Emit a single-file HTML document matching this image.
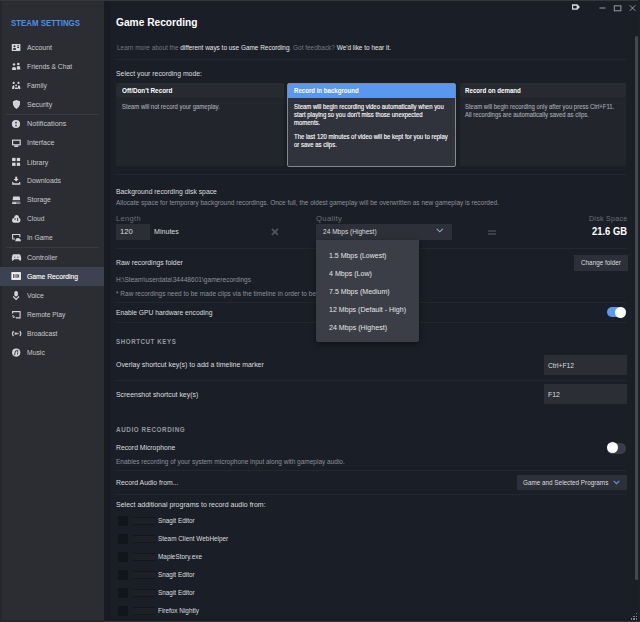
<!DOCTYPE html>
<html><head><meta charset="utf-8"><style>
html,body{margin:0;padding:0;}
body{width:640px;height:622px;overflow:hidden;position:relative;background:#1a1e26;font-family:"Liberation Sans", sans-serif;}
.t{position:absolute;white-space:pre;}
.k{-webkit-text-stroke-width:0.12px;}
.r{position:absolute;}
</style></head><body>
<div class="r" style="left:0px;top:0px;width:104px;height:622px;background:#2c2d32;"></div>
<div class="r" style="left:0px;top:0px;width:2px;height:622px;background:#26272b;"></div>
<div class="r" style="left:104px;top:0px;width:536px;height:622px;background:#1a1e26;"></div>
<div class="r" style="left:104px;top:0px;width:7px;height:622px;background:#181b21;"></div>
<div class="r" style="left:0px;top:0px;width:640px;height:1px;background:#35373c;"></div>
<div class="r" style="left:638px;top:0px;width:2px;height:622px;background:#1d2026;"></div>
<div class="r" style="left:104px;top:619px;width:536px;height:1px;background:#171a20;"></div>
<div class="r" style="left:0px;top:620px;width:104px;height:2px;background:#26272b;"></div>
<div class="r" style="left:104px;top:620px;width:536px;height:1px;background:#1c1e23;"></div>
<div class="r" style="left:104px;top:621px;width:536px;height:1px;background:#303236;"></div>
<div class="t" style="left:11.00px;top:18px;font-size:8.60px;line-height:10px;color:#4e90e8;transform:scaleX(0.9140);transform-origin:0 0;font-weight:bold;">STEAM SETTINGS</div>
<div class="r" style="left:0px;top:267px;width:104px;height:19px;background:#3d4250;"></div>
<div class="r" style="left:6px;top:114px;width:93px;height:1px;background:#393b41;"></div>
<div class="r" style="left:6px;top:247px;width:93px;height:1px;background:#393b41;"></div>
<svg class="r" style="left:0;top:0" width="30" height="370" viewBox="0 0 30 370">
    <!-- account -->
    <rect x="11.8" y="44" width="8.6" height="7" rx="0.6" fill="#d4d6d9"/>
    <circle cx="14.5" cy="46.3" r="1" fill="#2c2d32"/><rect x="13.2" y="48.1" width="2.7" height="1.8" fill="#2c2d32"/>
    <rect x="17.3" y="45.3" width="1.7" height="1" fill="#2c2d32"/><rect x="17.3" y="47" width="1.7" height="1" fill="#2c2d32"/>
    <!-- friends -->
    <circle cx="14" cy="64.4" r="1.2" fill="#d4d6d9"/><circle cx="18.3" cy="64" r="1.3" fill="#d4d6d9"/>
    <path d="M12 70 L12.3 67.6 Q14 66.3 15.8 67.6 L16 70Z" fill="#d4d6d9"/><path d="M16.8 69.6 L16.9 66.6 Q18.5 65.6 20 66.6 L20.4 69.6Z" fill="#d4d6d9"/>
    <!-- family -->
    <circle cx="13.7" cy="82.9" r="1.1" fill="#d4d6d9"/><circle cx="18.5" cy="82.9" r="1.1" fill="#d4d6d9"/><circle cx="16.1" cy="85.4" r="0.9" fill="#d4d6d9"/>
    <path d="M12 89 Q11.8 86 13.6 85 Q14.6 85.5 14.4 87.5 L13.8 89Z" fill="#d4d6d9"/><path d="M20.4 89 Q20.6 86 18.8 85 Q17.8 85.5 18 87.5 L18.6 89Z" fill="#d4d6d9"/>
    <rect x="14.9" y="87.5" width="3" height="1.6" rx="0.6" fill="#d4d6d9"/>
    <!-- security -->
    <path d="M16.45 100 L20 101.3 L19.9 104.6 Q19.3 107.6 16.45 108.9 Q13.6 107.6 13 104.6 L12.9 101.3Z" fill="#d4d6d9"/>
    <circle cx="16.45" cy="104.3" r="1.6" fill="none" stroke="#b9bbbf" stroke-width="0.5"/>
    <!-- notifications -->
    <circle cx="16" cy="124" r="4.1" fill="#d4d6d9"/><rect x="15.2" y="121.8" width="1.6" height="1.8" rx="0.6" fill="#2c2d32"/><circle cx="16" cy="125.5" r="0.85" fill="#2c2d32"/>
    <!-- interface -->
    <rect x="12.6" y="140.2" width="7.6" height="4.6" fill="none" stroke="#d4d6d9" stroke-width="1.2"/><rect x="14.3" y="145.4" width="4" height="1.6" fill="#d4d6d9"/>
    <!-- library -->
    <rect x="12.1" y="157.9" width="3.5" height="3.2" fill="#d4d6d9"/><rect x="16.8" y="157.9" width="3.3" height="3.2" fill="#d4d6d9"/>
    <rect x="12.1" y="162.7" width="3.5" height="3.2" fill="#d4d6d9"/><rect x="16.8" y="162.7" width="3.3" height="3.2" fill="#d4d6d9"/>
    <!-- downloads -->
    <path d="M15.2 176.8 H17.2 V179 H18.8 L16.2 181.6 L13.6 179 H15.2Z" fill="#d4d6d9"/>
    <path d="M12.2 182 H13.4 V183.3 H19.1 V182 H20.3 V184.8 H12.2Z" fill="#d4d6d9"/>
    <!-- storage -->
    <path d="M13.2 196.6 H19.6 L20.2 200 H12.6Z" fill="#d4d6d9"/><rect x="12.3" y="200.6" width="8" height="1.2" fill="#6c6e73"/>
    <rect x="12.2" y="202.2" width="4.4" height="1.8" fill="#d4d6d9"/><rect x="16.6" y="202.2" width="3.8" height="1.8" fill="#8d8f94"/>
    <!-- cloud -->
    <path d="M13.8 222.8 Q11.8 222.6 12 220 Q12.3 218 13.9 218 Q14.5 215 16.5 215 Q18.8 215.1 19.2 218 Q20.6 218.5 20.5 220.3 Q20.3 222.7 18.6 222.8Z" fill="#d4d6d9"/>
    <rect x="14.4" y="218.4" width="1.3" height="1.3" fill="#2c2d32"/><rect x="17.2" y="217.8" width="0.9" height="3.2" fill="#2c2d32"/>
    <!-- in game -->
    <path d="M15 239 H12.6 V234.5 H19.8 V237" fill="none" stroke="#d4d6d9" stroke-width="1.1"/>
    <path d="M15.3 241.2 Q15.6 238.1 17.8 238 Q20.6 238 21 241.2Z" fill="#d4d6d9"/>
    <!-- controller -->
    <path d="M13.3 254.2 H19.5 Q21 254.8 21.2 258.2 Q21.3 261 20.1 261 L18.6 259.2 H14.2 L12.7 261 Q11.6 261 11.8 258.2 Q12 254.8 13.3 254.2Z" fill="#d4d6d9"/>
    <circle cx="14.7" cy="257.2" r="0.7" fill="#6c6e73"/><circle cx="17.9" cy="257.2" r="0.7" fill="#6c6e73"/>
    <!-- game recording -->
    <rect x="11.4" y="272.1" width="9.5" height="7.8" fill="#f4f4f5"/>
    <rect x="13.2" y="274" width="1.1" height="4" fill="#3d4250"/><rect x="14.5" y="274.3" width="1.8" height="3.5" fill="#8f939b"/>
    <rect x="16.5" y="274" width="1.1" height="4" fill="#3d4250"/><path d="M18 274.6 H19.3 V275.4 H18.8 V276.8 H19.3 V277.6 H18Z" fill="#3d4250"/>
    <!-- voice -->
    <rect x="14.3" y="291" width="3.6" height="5.6" rx="1.8" fill="#d4d6d9"/>
    <path d="M13.2 296.5 L16.1 299.4 L19 296.5" fill="none" stroke="#d4d6d9" stroke-width="1.2"/>
    <!-- remote play -->
    <path d="M12.6 313.5 V311.6 H20.1 V317.9 H16" fill="none" stroke="#d4d6d9" stroke-width="1.1"/>
    <path d="M12.5 315 L15.2 317.8 M12.5 316.6 L13.8 318" stroke="#d4d6d9" stroke-width="1"/>
    <!-- broadcast -->
    <path d="M13.5 331.2 Q11.5 333.6 13.5 336 M19.8 331.2 Q21.8 333.6 19.8 336" fill="none" stroke="#d4d6d9" stroke-width="1.2"/>
    <path d="M14.6 332.3 L18.7 333.1 V334.1 L14.6 335Z" fill="#b4b6ba"/>
    <!-- music -->
    <circle cx="16.2" cy="352.6" r="4.1" fill="#d4d6d9"/>
    <path d="M14.6 355.3 L15.4 351 L17.8 350.4 L17.5 354.6" fill="none" stroke="#2c2d32" stroke-width="0.9"/><circle cx="17.6" cy="352.6" r="0.6" fill="#8d8f94"/>
    </svg>
<div class="t" style="left:26.60px;top:43px;font-size:7.40px;line-height:9px;color:#c8cacd;transform:scaleX(0.9313);transform-origin:0 0;">Account</div>
<div class="t" style="left:26.60px;top:62px;font-size:7.40px;line-height:9px;color:#c8cacd;transform:scaleX(0.9139);transform-origin:0 0;">Friends &amp; Chat</div>
<div class="t" style="left:26.60px;top:81px;font-size:7.40px;line-height:9px;color:#c8cacd;transform:scaleX(0.9089);transform-origin:0 0;">Family</div>
<div class="t" style="left:26.60px;top:100px;font-size:7.40px;line-height:9px;color:#c8cacd;transform:scaleX(0.9428);transform-origin:0 0;">Security</div>
<div class="t" style="left:26.60px;top:119px;font-size:7.40px;line-height:9px;color:#c8cacd;transform:scaleX(0.9750);transform-origin:0 0;">Notifications</div>
<div class="t" style="left:26.60px;top:138px;font-size:7.40px;line-height:9px;color:#c8cacd;transform:scaleX(0.9551);transform-origin:0 0;">Interface</div>
<div class="t" style="left:26.60px;top:158px;font-size:7.40px;line-height:9px;color:#c8cacd;transform:scaleX(0.9416);transform-origin:0 0;">Library</div>
<div class="t" style="left:26.60px;top:176px;font-size:7.40px;line-height:9px;color:#c8cacd;transform:scaleX(0.9288);transform-origin:0 0;">Downloads</div>
<div class="t" style="left:26.60px;top:195px;font-size:7.40px;line-height:9px;color:#c8cacd;transform:scaleX(0.9223);transform-origin:0 0;">Storage</div>
<div class="t" style="left:26.60px;top:214px;font-size:7.40px;line-height:9px;color:#c8cacd;transform:scaleX(0.8999);transform-origin:0 0;">Cloud</div>
<div class="t" style="left:26.60px;top:233px;font-size:7.40px;line-height:9px;color:#c8cacd;transform:scaleX(0.9056);transform-origin:0 0;">In Game</div>
<div class="t" style="left:26.60px;top:253px;font-size:7.40px;line-height:9px;color:#c8cacd;transform:scaleX(0.9508);transform-origin:0 0;">Controller</div>
<div class="t k" style="left:26.60px;top:272px;font-size:7.40px;line-height:9px;color:#ffffff;transform:scaleX(0.9117);transform-origin:0 0;">Game Recording</div>
<div class="t" style="left:26.60px;top:291px;font-size:7.40px;line-height:9px;color:#c8cacd;transform:scaleX(0.9337);transform-origin:0 0;">Voice</div>
<div class="t" style="left:26.60px;top:310px;font-size:7.40px;line-height:9px;color:#c8cacd;transform:scaleX(0.9064);transform-origin:0 0;">Remote Play</div>
<div class="t" style="left:26.60px;top:329px;font-size:7.40px;line-height:9px;color:#c8cacd;transform:scaleX(0.9155);transform-origin:0 0;">Broadcast</div>
<div class="t" style="left:26.60px;top:348px;font-size:7.40px;line-height:9px;color:#c8cacd;transform:scaleX(0.9213);transform-origin:0 0;">Music</div>
<svg class="r" style="left:0;top:0" width="640" height="16" viewBox="0 0 640 16"><path d="M572 4.3 H577.4 L579.9 7.05 L577.4 9.8 H572Z" fill="#d4d6d9"/><rect x="573.2" y="5.8" width="3.4" height="2.6" fill="#1b1e25"/><rect x="599.5" y="7.5" width="6" height="1" fill="#9a9ca1"/><rect x="614.3" y="5.8" width="6.6" height="5" fill="none" stroke="#9a9ca1" stroke-width="1"/><path d="M629.8 5.3 L635.3 10.8 M635.3 5.3 L629.8 10.8" stroke="#9a9ca1" stroke-width="1"/></svg>
<div class="t" style="left:116.20px;top:16px;font-size:11.20px;line-height:12px;color:#ffffff;transform:scaleX(0.9105);transform-origin:0 0;font-weight:bold;">Game Recording</div>
<div class="t" style="left:117.00px;top:44px;font-size:7.00px;line-height:7px;color:#737a84;transform:scaleX(0.9184);transform-origin:0 0;">Learn more about the <span style="color:#e8e9ea">different ways to use Game Recording</span>. Got feedback? <span style="color:#e8e9ea">We'd like to hear it.</span></div>
<div class="r" style="left:116px;top:59px;width:511px;height:1px;background:#24272e;"></div>
<div class="t" style="left:116.00px;top:69px;font-size:7.50px;line-height:9px;color:#dcdedf;transform:scaleX(0.9169);transform-origin:0 0;">Select your recording mode:</div>
<div class="r" style="left:116px;top:83px;width:168px;height:83px;background:#22252c;"></div>
<div class="r" style="left:116px;top:83px;width:168px;height:14px;background:#272a31;"></div>
<div class="r" style="left:287px;top:83px;width:169px;height:83.5px;background:#30333b;border:1px solid #848991;box-sizing:border-box;border-radius:2px;"></div>
<div class="r" style="left:288px;top:84px;width:167px;height:14px;background:#5a97ee;"></div>
<div class="r" style="left:460px;top:83px;width:166px;height:83px;background:#22252c;"></div>
<div class="r" style="left:460px;top:83px;width:166px;height:14px;background:#272a31;"></div>
<div class="t" style="left:121.90px;top:87px;font-size:6.60px;line-height:7px;color:#ffffff;transform:scaleX(0.9593);transform-origin:0 0;font-weight:bold;">Off/Don't Record</div>
<div class="t" style="left:294.00px;top:87px;font-size:6.60px;line-height:7px;color:#ffffff;transform:scaleX(0.9238);transform-origin:0 0;font-weight:bold;">Record in background</div>
<div class="t" style="left:465.40px;top:87px;font-size:6.60px;line-height:7px;color:#ffffff;transform:scaleX(0.9352);transform-origin:0 0;font-weight:bold;">Record on demand</div>
<div class="t k" style="left:294.00px;top:103px;font-size:6.60px;line-height:7px;color:#ffffff;transform:scaleX(0.9060);transform-origin:0 0;">Steam will begin recording video automatically when you</div>
<div class="t k" style="left:294.00px;top:111px;font-size:6.60px;line-height:7px;color:#ffffff;transform:scaleX(0.9060);transform-origin:0 0;">start playing so you don't miss those unexpected</div>
<div class="t k" style="left:294.00px;top:119px;font-size:6.60px;line-height:7px;color:#ffffff;transform:scaleX(0.9060);transform-origin:0 0;">moments.</div>
<div class="t k" style="left:294.00px;top:133px;font-size:6.60px;line-height:7px;color:#ffffff;transform:scaleX(0.9060);transform-origin:0 0;">The last 120 minutes of video will be kept for you to replay</div>
<div class="t k" style="left:294.00px;top:141px;font-size:6.60px;line-height:7px;color:#ffffff;transform:scaleX(0.9060);transform-origin:0 0;">or save as clips.</div>
<div class="t k" style="left:122.00px;top:103px;font-size:6.60px;line-height:7px;color:#a3a8b0;transform:scaleX(0.9057);transform-origin:0 0;">Steam will not record your gameplay.</div>
<div class="t k" style="left:465.40px;top:103px;font-size:6.60px;line-height:7px;color:#a3a8b0;transform:scaleX(0.9027);transform-origin:0 0;">Steam will begin recording only after you press Ctrl+F11.</div>
<div class="t k" style="left:465.40px;top:111px;font-size:6.60px;line-height:7px;color:#a3a8b0;transform:scaleX(0.9060);transform-origin:0 0;">All recordings are automatically saved as clips.</div>
<div class="r" style="left:116px;top:174px;width:511px;height:1px;background:#24272e;"></div>
<div class="t" style="left:116.00px;top:187px;font-size:7.50px;line-height:9px;color:#dcdedf;transform:scaleX(0.9099);transform-origin:0 0;">Background recording disk space</div>
<div class="t" style="left:116.00px;top:199px;font-size:7.00px;line-height:7px;color:#8b929b;transform:scaleX(0.9278);transform-origin:0 0;">Allocate space for temporary background recordings. Once full, the oldest gameplay will be overwritten as new gameplay is recorded.</div>
<div class="t" style="left:116.00px;top:214px;font-size:7.20px;line-height:9px;color:#6b717b;transform:scaleX(1.0457);transform-origin:0 0;letter-spacing:0.3px;">Length</div>
<div class="t" style="left:316.30px;top:214px;font-size:7.20px;line-height:9px;color:#6b717b;transform:scaleX(1.0700);transform-origin:0 0;letter-spacing:0.3px;">Quality</div>
<div class="t" style="left:589.00px;top:214px;font-size:7.20px;line-height:9px;color:#6b717b;transform:scaleX(0.9765);transform-origin:0 0;letter-spacing:0.3px;">Disk Space</div>
<div class="r" style="left:116px;top:224px;width:34px;height:16px;background:#2b2e35;"></div>
<div class="t" style="left:120.40px;top:227px;font-size:7.40px;line-height:9px;color:#dcdedf;transform:scaleX(1.0370);transform-origin:0 0;">120</div>
<div class="t" style="left:154.00px;top:227px;font-size:7.40px;line-height:9px;color:#dcdedf;transform:scaleX(0.9611);transform-origin:0 0;">Minutes</div>
<svg class="r" style="left:271.3px;top:227.8px" width="8" height="8" viewBox="0 0 8 8"><path d="M0.9 0.9 L6.9 6.9 M6.9 0.9 L0.9 6.9" stroke="#4d525b" stroke-width="2"/></svg>
<div class="r" style="left:316px;top:224px;width:136px;height:16px;background:#2d3038;"></div>
<div class="t" style="left:322.90px;top:227px;font-size:7.40px;line-height:9px;color:#dcdedf;transform:scaleX(0.8882);transform-origin:0 0;">24 Mbps (Highest)</div>
<svg class="r" style="left:436px;top:228px" width="8" height="5" viewBox="0 0 8 5"><path d="M0.8 0.8 L3.8 3.8 L6.8 0.8" stroke="#86a9e6" stroke-width="1.1" fill="none"/></svg>
<div class="r" style="left:488px;top:229.8px;width:8px;height:1.8px;background:#3a3e46;"></div>
<div class="r" style="left:488px;top:233.2px;width:8px;height:1.8px;background:#3a3e46;"></div>
<div class="t" style="left:592.20px;top:226px;font-size:10.00px;line-height:11px;color:#ffffff;transform:scaleX(0.9398);transform-origin:0 0;font-weight:bold;">21.6 GB</div>
<div class="r" style="left:116px;top:248px;width:511px;height:1px;background:#24272e;"></div>
<div class="t" style="left:116.00px;top:258px;font-size:7.50px;line-height:9px;color:#dcdedf;transform:scaleX(0.9157);transform-origin:0 0;">Raw recordings folder</div>
<div class="r" style="left:574px;top:255px;width:54px;height:16px;background:#2d3038;"></div>
<div class="t" style="left:581.00px;top:258px;font-size:7.20px;line-height:9px;color:#dcdedf;transform:scaleX(0.8822);transform-origin:0 0;">Change folder</div>
<div class="t" style="left:116.00px;top:276px;font-size:7.00px;line-height:7px;color:#8b929b;transform:scaleX(0.9402);transform-origin:0 0;">H:\Steam\userdata\34448601\gamerecordings</div>
<div class="t" style="left:116.00px;top:290px;font-size:7.00px;line-height:7px;color:#8b929b;transform:scaleX(0.9278);transform-origin:0 0;">* Raw recordings need to be made clips via the timeline in order to be saved permanently.</div>
<div class="r" style="left:116px;top:302px;width:511px;height:1px;background:#24272e;"></div>
<div class="t" style="left:116.00px;top:308px;font-size:7.50px;line-height:9px;color:#dcdedf;transform:scaleX(0.8962);transform-origin:0 0;">Enable GPU hardware encoding</div>
<div class="r" style="left:607px;top:307px;width:19px;height:10px;background:#5a9bf0;border-radius:5px;"></div>
<div class="r" style="left:615px;top:306.6px;width:11.2px;height:11.2px;background:#ffffff;border-radius:50%;"></div>
<div class="r" style="left:116px;top:322px;width:511px;height:1px;background:#24272e;"></div>
<div class="t" style="left:116.00px;top:337px;font-size:7.40px;line-height:9px;color:#969aa1;transform:scaleX(0.8353);transform-origin:0 0;font-weight:bold;letter-spacing:0.7px;">SHORTCUT KEYS</div>
<div class="t" style="left:116.00px;top:360px;font-size:7.50px;line-height:9px;color:#dcdedf;transform:scaleX(0.9258);transform-origin:0 0;">Overlay shortcut key(s) to add a timeline marker</div>
<div class="r" style="left:544px;top:355px;width:83px;height:20px;background:#2b2e35;"></div>
<div class="t" style="left:548.00px;top:361px;font-size:7.40px;line-height:9px;color:#dcdedf;transform:scaleX(0.9098);transform-origin:0 0;">Ctrl+F12</div>
<div class="r" style="left:116px;top:380px;width:511px;height:1px;background:#24272e;"></div>
<div class="t" style="left:116.00px;top:390px;font-size:7.50px;line-height:9px;color:#dcdedf;transform:scaleX(0.9215);transform-origin:0 0;">Screenshot shortcut key(s)</div>
<div class="r" style="left:544px;top:384px;width:83px;height:20px;background:#2b2e35;"></div>
<div class="t" style="left:548.00px;top:390px;font-size:7.40px;line-height:9px;color:#dcdedf;transform:scaleX(0.9333);transform-origin:0 0;">F12</div>
<div class="t" style="left:116.00px;top:425px;font-size:7.40px;line-height:9px;color:#969aa1;transform:scaleX(0.8502);transform-origin:0 0;font-weight:bold;letter-spacing:0.7px;">AUDIO RECORDING</div>
<div class="t" style="left:116.00px;top:443px;font-size:7.50px;line-height:9px;color:#dcdedf;transform:scaleX(0.9060);transform-origin:0 0;">Record Microphone</div>
<div class="t" style="left:116.00px;top:458px;font-size:7.00px;line-height:7px;color:#8b929b;transform:scaleX(0.9289);transform-origin:0 0;">Enables recording of your system microphone input along with gameplay audio.</div>
<div class="r" style="left:607px;top:442.5px;width:19px;height:11px;background:#3b3e46;border-radius:5.5px;"></div>
<div class="r" style="left:607px;top:442.2px;width:11.3px;height:11.3px;background:#ffffff;border-radius:50%;"></div>
<div class="r" style="left:116px;top:470px;width:511px;height:1px;background:#24272e;"></div>
<div class="t" style="left:116.00px;top:478px;font-size:7.50px;line-height:9px;color:#dcdedf;transform:scaleX(0.9128);transform-origin:0 0;">Record Audio from...</div>
<div class="r" style="left:517px;top:475px;width:110px;height:15px;background:#2d3038;"></div>
<div class="t" style="left:523.00px;top:479px;font-size:7.00px;line-height:7px;color:#dcdedf;transform:scaleX(0.9059);transform-origin:0 0;">Game and Selected Programs</div>
<svg class="r" style="left:612.5px;top:479.5px" width="7" height="5" viewBox="0 0 7 5"><path d="M0.7 0.8 L3.5 3.6 L6.3 0.8" stroke="#5a9af0" stroke-width="1.1" fill="none"/></svg>
<div class="r" style="left:116px;top:494px;width:511px;height:1px;background:#24272e;"></div>
<div class="t" style="left:116.00px;top:500px;font-size:7.50px;line-height:9px;color:#dcdedf;transform:scaleX(0.9345);transform-origin:0 0;">Select additional programs to record audio from:</div>
<div class="r" style="left:118px;top:516px;width:10px;height:10px;background:#12151b;"></div>
<div class="r" style="left:133px;top:517px;width:22px;height:8px;background:#1d2027;border-top:1px solid #13161b;border-bottom:1px solid #13161b;box-sizing:border-box;"></div>
<div class="t" style="left:158.40px;top:517px;font-size:7.00px;line-height:7px;color:#dcdedf;transform:scaleX(0.9131);transform-origin:0 0;">Snagit Editor</div>
<div class="r" style="left:118px;top:534px;width:10px;height:10px;background:#12151b;"></div>
<div class="r" style="left:133px;top:535px;width:22px;height:8px;background:#1d2027;border-top:1px solid #13161b;border-bottom:1px solid #13161b;box-sizing:border-box;"></div>
<div class="t" style="left:158.40px;top:535px;font-size:7.00px;line-height:7px;color:#dcdedf;transform:scaleX(0.9131);transform-origin:0 0;">Steam Client WebHelper</div>
<div class="r" style="left:118px;top:552px;width:10px;height:10px;background:#12151b;"></div>
<div class="r" style="left:133px;top:553px;width:22px;height:8px;background:#1d2027;border-top:1px solid #13161b;border-bottom:1px solid #13161b;box-sizing:border-box;"></div>
<div class="t" style="left:158.40px;top:553px;font-size:7.00px;line-height:7px;color:#dcdedf;transform:scaleX(0.9131);transform-origin:0 0;">MapleStory.exe</div>
<div class="r" style="left:118px;top:570px;width:10px;height:10px;background:#12151b;"></div>
<div class="r" style="left:133px;top:571px;width:22px;height:8px;background:#1d2027;border-top:1px solid #13161b;border-bottom:1px solid #13161b;box-sizing:border-box;"></div>
<div class="t" style="left:158.40px;top:571px;font-size:7.00px;line-height:7px;color:#dcdedf;transform:scaleX(0.9131);transform-origin:0 0;">Snagit Editor</div>
<div class="r" style="left:118px;top:588px;width:10px;height:10px;background:#12151b;"></div>
<div class="r" style="left:133px;top:589px;width:22px;height:8px;background:#1d2027;border-top:1px solid #13161b;border-bottom:1px solid #13161b;box-sizing:border-box;"></div>
<div class="t" style="left:158.40px;top:589px;font-size:7.00px;line-height:7px;color:#dcdedf;transform:scaleX(0.9131);transform-origin:0 0;">Snagit Editor</div>
<div class="r" style="left:118px;top:606px;width:10px;height:10px;background:#12151b;"></div>
<div class="r" style="left:133px;top:607px;width:22px;height:8px;background:#1d2027;border-top:1px solid #13161b;border-bottom:1px solid #13161b;box-sizing:border-box;"></div>
<div class="t" style="left:158.40px;top:607px;font-size:7.00px;line-height:7px;color:#dcdedf;transform:scaleX(0.9131);transform-origin:0 0;">Firefox Nightly</div>
<div class="r" style="left:316px;top:240px;width:103px;height:102px;background:#3b3e46;box-shadow:0 2px 6px rgba(0,0,0,0.4);border-radius:0 0 2px 2px;"></div>
<div class="t" style="left:328.90px;top:251px;font-size:7.40px;line-height:9px;color:#e6e7e8;transform:scaleX(0.9446);transform-origin:0 0;">1.5 Mbps (Lowest)</div>
<div class="t" style="left:328.90px;top:269px;font-size:7.40px;line-height:9px;color:#e6e7e8;transform:scaleX(0.9570);transform-origin:0 0;">4 Mbps (Low)</div>
<div class="t" style="left:328.90px;top:287px;font-size:7.40px;line-height:9px;color:#e6e7e8;transform:scaleX(0.9538);transform-origin:0 0;">7.5 Mbps (Medium)</div>
<div class="t" style="left:328.90px;top:305px;font-size:7.40px;line-height:9px;color:#e6e7e8;transform:scaleX(0.9565);transform-origin:0 0;">12 Mbps (Default - High)</div>
<div class="t" style="left:328.90px;top:323px;font-size:7.40px;line-height:9px;color:#e6e7e8;transform:scaleX(0.9610);transform-origin:0 0;">24 Mbps (Highest)</div>
<div class="r" style="left:635.5px;top:612.5px;width:1.5px;height:1.5px;background:#7d8085;"></div>
<div class="r" style="left:633px;top:615.5px;width:1.5px;height:1.5px;background:#7d8085;"></div>
<div class="r" style="left:635.5px;top:615.5px;width:1.5px;height:1.5px;background:#7d8085;"></div>
<div class="r" style="left:630.5px;top:618px;width:1.5px;height:1.5px;background:#7d8085;"></div>
<div class="r" style="left:633px;top:618px;width:1.5px;height:1.5px;background:#7d8085;"></div>
<div class="r" style="left:635.5px;top:618px;width:1.5px;height:1.5px;background:#7d8085;"></div>
<div class="r" style="left:635px;top:36px;width:3.3px;height:544px;background:#44474e;border-radius:1.5px;"></div>
</body></html>
